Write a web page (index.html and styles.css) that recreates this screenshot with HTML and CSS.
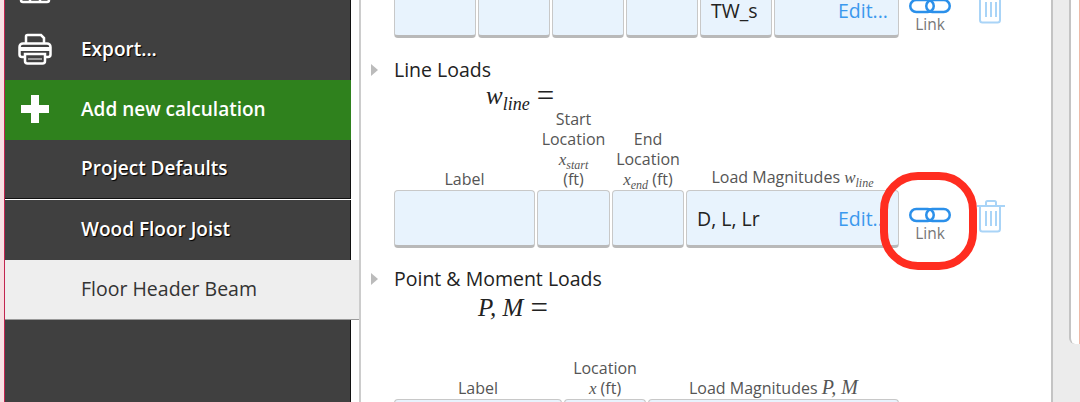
FILE: index.html
```html
<!DOCTYPE html>
<html lang="en">

<head>
  <meta charset="UTF-8">
  <title>Floor Header Beam</title>
  <link rel="stylesheet" href="styles.css">
</head>

<body>
  <div class="app">
    <div class="edge"></div>

    <ul class="menu">
      <li class="menu-item">
        <span class="menu-icon">
          <svg width="32" height="30" viewBox="0 0 32 30" fill="none" stroke="#fff" stroke-width="2.5">
            <rect x="2" y="2" width="28" height="26" rx="2" />
            <path d="M2 19h28M11 19v9M21 19v9" />
          </svg>
        </span>
      </li>
      <li class="menu-item">
        <span class="menu-icon">
          <svg width="34" height="32" viewBox="0 0 34 32" fill="none" stroke="#fff" stroke-width="2.5">
            <path d="M8 11V3.500C8 2.500 8.500 2 9.500 2H23l3 3v6" />
            <path d="M7 24H4c-1.500 0-2.500-1-2.500-2.500V14c0-2 1.500-3.500 3.500-3.500h24c2 0 3.500 1.500 3.500 3.500v7.500c0 1.500-1 2.500-2.500 2.500h-3" />
            <path d="M2 16h30" stroke-width="4" />
            <path d="M7 21h20v7c0 1.500-1 2.500-2.500 2.500h-15C8 30.500 7 29.500 7 28z" />
            <path d="M10 26h14" stroke-width="1.500" stroke="#bbb" />
          </svg>
        </span>
        Export...
      </li>
      <li class="menu-item menu-add">
        <span class="menu-icon">
          <svg width="28" height="28" viewBox="0 0 28 28" fill="#fff">
            <path d="M10 0h8v10h10v8H18v10h-8V18H0v-8h10z" />
          </svg>
        </span>
        Add new calculation
      </li>
      <li class="menu-item menu-defaults"><span class="menu-icon"></span>Project Defaults</li>
      <li class="menu-item"><span class="menu-icon"></span>Wood Floor Joist</li>
      <li class="menu-item menu-active"><span class="menu-icon"></span>Floor Header Beam</li>
      <li class="menu-rest"></li>
    </ul>

    <div class="gutter"></div>

    <div class="content">
      <div class="table-row cols-top">
        <div class="cell"></div>
        <div class="cell"></div>
        <div class="cell"></div>
        <div class="cell"></div>
        <div class="cell"><span class="cell-text">TW_s</span></div>
        <div class="cell cell-edit"><span class="edit">Edit...</span></div>
        <div class="actions">
          <div class="link-box">
            <svg class="link-icon" width="42" height="18" viewBox="0 0 42 18" fill="none" stroke="#2b90ea" stroke-width="2.500">
              <rect x="1.250" y="3" width="23.500" height="12" rx="6" />
              <rect x="17.250" y="3" width="23.500" height="12" rx="6" />
            </svg>
            <span class="link-text">Link</span>
          </div>
          <svg class="trash" width="30" height="34" viewBox="0 0 30 34" fill="none" stroke="#a9d4f7" stroke-width="2">
            <path d="M1 7h28M10 7V3.500C10 2.500 10.500 2 11.500 2h7c1 0 1.500 .5 1.500 1.500V7" />
            <path d="M4 7v23c0 1.500 1 2.500 2.500 2.500h15c1.500 0 2.500-1 2.500-2.500V7" />
            <path d="M10 12v15M15 12v15M20 12v15" />
          </svg>
        </div>
      </div>

      <div class="section-head section-line">
        <span class="arrow"></span>
        Line Loads
      </div>
      <div class="formula formula-line"><i>w<sub>line</sub></i><span class="eq">=</span></div>
      <div class="table-head cols-line">
        <div>Label</div>
        <div>Start<br>Location<br><i class="math">x<sub>start</sub></i><br>(ft)</div>
        <div>End<br>Location<br><i class="math">x<sub>end</sub></i> (ft)</div>
        <div class="head-load">Load Magnitudes <i class="math">w<sub>line</sub></i></div>
      </div>
      <div class="table-row cols-line row-line">
        <div class="cell"></div>
        <div class="cell"></div>
        <div class="cell"></div>
        <div class="cell cell-edit">
          <span class="cell-text">D, L, Lr</span>
          <span class="edit">Edit...</span>
        </div>
        <div class="actions">
          <div class="link-box">
            <svg class="link-icon" width="42" height="18" viewBox="0 0 42 18" fill="none" stroke="#2b90ea" stroke-width="2.500">
              <rect x="1.250" y="3" width="23.500" height="12" rx="6" />
              <rect x="17.250" y="3" width="23.500" height="12" rx="6" />
            </svg>
            <span class="link-text">Link</span>
          </div>
          <svg class="trash" width="30" height="34" viewBox="0 0 30 34" fill="none" stroke="#a9d4f7" stroke-width="2">
            <path d="M1 7h28M10 7V3.500C10 2.500 10.500 2 11.500 2h7c1 0 1.500 .5 1.500 1.500V7" />
            <path d="M4 7v23c0 1.500 1 2.500 2.500 2.500h15c1.500 0 2.500-1 2.500-2.500V7" />
            <path d="M10 12v15M15 12v15M20 12v15" />
          </svg>
        </div>
      </div>

      <div class="section-head section-point">
        <span class="arrow"></span>
        Point &amp; Moment Loads
      </div>
      <div class="formula formula-point"><i>P, M</i><span class="eq">=</span></div>
      <div class="table-head cols-point">
        <div>Label</div>
        <div>Location<br><i class="math">x</i> (ft)</div>
        <div>Load Magnitudes <i class="math big">P, M</i></div>
      </div>
      <div class="table-row cols-point row-point">
        <div class="cell"></div>
        <div class="cell"></div>
        <div class="cell"></div>
      </div>

      <div class="ring"></div>
    </div>

    <div class="scrollbar">
      <div class="scrollbar-top"></div>
    </div>
  </div>
</body>

</html>
```

FILE: styles.css
```css
body,
ul,
li {
  margin: 0;
  padding: 0;
  box-sizing: border-box;
}
ul {
  list-style: none;
}
body {
  width: 1080px;
  height: 402px;
  overflow: hidden;
  background: #fff;
  font-family: "Open Sans", "Noto Sans", sans-serif;
}
.app {
  display: flex;
  height: 402px;
  overflow: hidden;
}
.edge {
  width: 5px;
  flex: none;
  background: #f7dfe3;
  border-right: 1px solid #c2244f;
  box-sizing: border-box;
}

/* sidebar */
.menu {
  width: 346px;
  flex: none;
  display: flex;
  flex-direction: column;
  margin-top: -40px;
  height: 442px;
  background: #404040;
}
.menu-item {
  display: flex;
  align-items: center;
  height: 60px;
  flex: none;
  padding-bottom: 2px;
  font-size: 19px;
  font-weight: 600;
  color: #fff;
  text-shadow: 1px 1px 1px #000;
  border-right: 1px solid #111;
}
.menu-icon {
  width: 60px;
  margin-right: 16px;
  display: flex;
  justify-content: center;
}
.menu-add {
  background: #2f811d;
  text-shadow: none;
  border-right-color: #2f811d;
}
.menu-defaults {
  border-bottom: 1px solid #111;
  box-shadow: 0 1px 0 #fff;
  height: 59px;
  margin-bottom: 1px;
}
.menu-active {
  background: #eee;
  color: #333;
  font-size: 19.500px;
  font-weight: 400;
  text-shadow: none;
  padding-bottom: 3px;
  margin-right: -8px;
  border-right: 0;
  border-bottom: 1px solid #999;
}
.menu-rest {
  flex: 1;
  border-right: 1px solid #111;
}
.gutter {
  width: 8px;
  flex: none;
}

/* main panel */
.content {
  position: relative;
  width: 694px;
  flex: none;
  box-sizing: border-box;
  border-left: 2px solid #ccc;
  border-right: 2px solid #c4c4c4;
  padding-left: 33px;
}
.table-row {
  display: grid;
  column-gap: 2px;
}
.table-head {
  display: grid;
  column-gap: 2px;
  align-items: end;
  text-align: center;
  font-size: 16px;
  line-height: 20px;
  color: #555;
  white-space: nowrap;
}
.head-load {
  padding-bottom: 2px;
}
.cols-top {
  grid-template-columns: 82px 72px 72px 72px 72px 125px auto;
  height: 38px;
}
.cols-line {
  grid-template-columns: 141px 73px 72px 213px auto;
}
.cols-point {
  grid-template-columns: 168px 82px 251px;
}
.cell {
  display: flex;
  align-items: center;
  justify-content: space-between;
  background: #e8f3fd;
  border: 1px solid #c8c8c8;
  border-bottom: 3px solid #b9b9b9;
  border-radius: 4px;
  box-sizing: border-box;
  padding: 0 10px;
  font-size: 19.500px;
  overflow: hidden;
  white-space: nowrap;
}
.cols-top .cell {
  border-top: 0;
  border-radius: 0 0 4px 4px;
}
.cols-top .cell-edit {
  justify-content: flex-end;
}
.cols-top .cell-text,
.cols-top .edit {
  margin-top: -14px;
  line-height: 20px;
}
.cell-text {
  color: #222;
}
.edit {
  color: #3b99ee;
}
.row-line {
  height: 58px;
}
.row-point {
  height: 58px;
}
.actions {
  display: flex;
  align-items: flex-start;
  gap: 10px;
  padding-left: 8px;
}
.cols-top .actions {
  margin-top: -3px;
}
.row-line .actions {
  padding-top: 16px;
}
.link-box {
  display: flex;
  flex-direction: column;
  align-items: center;
  width: 42px;
}
.link-text {
  font-size: 15.500px;
  line-height: 16px;
  color: #777;
  margin-top: 1px;
}
.trash {
  margin-top: -7px;
  margin-left: 15px;
}

/* section titles */
.section-head {
  position: relative;
  font-size: 19.500px;
  line-height: 24px;
  color: #222;
}
.section-line {
  margin-top: 20px;
}
.section-point {
  margin-top: 19px;
}
.arrow {
  position: absolute;
  left: -23px;
  top: 6px;
  border-left: 7px solid #bbb;
  border-top: 6px solid transparent;
  border-bottom: 6px solid transparent;
}
.formula {
  display: flex;
  align-items: center;
  height: 26px;
  font-family: "Liberation Serif", serif;
  font-size: 25px;
  color: #222;
  white-space: nowrap;
}
.formula sub {
  font-size: 18px;
  line-height: 0;
}
.eq {
  font-size: 31px;
  line-height: 26px;
  margin-left: 7px;
}
.formula-line {
  margin-left: 92px;
  margin-top: 1px;
}
.formula-point {
  margin-left: 84px;
  margin-top: 4px;
}
.math {
  font-family: "Liberation Serif", serif;
  font-size: 17px;
  line-height: 0;
}
.math sub {
  font-size: 12px;
  line-height: 0;
}
.math.big {
  font-size: 20px;
}
.cols-line + .table-row,
.cols-point + .table-row {
  margin-top: 1px;
}
.table-head.cols-line {
  height: 80px;
}
.table-head.cols-point {
  height: 77px;
}

/* red callout drawn on top of the screenshot */
.ring {
  position: absolute;
  left: 519px;
  top: 172px;
  width: 97px;
  height: 98px;
  box-sizing: border-box;
  border: 8px solid #ff2d20;
  border-radius: 38px;
}

.scrollbar {
  flex: 1;
  background: #ececec;
  display: flex;
  justify-content: flex-end;
}
.scrollbar-top {
  width: 11px;
  height: 344px;
  background: #fff;
  border-left: 2px solid #c4c4c4;
  border-right: 1px solid #eeb9a8;
  border-bottom-left-radius: 6px;
  box-sizing: border-box;
}
```
